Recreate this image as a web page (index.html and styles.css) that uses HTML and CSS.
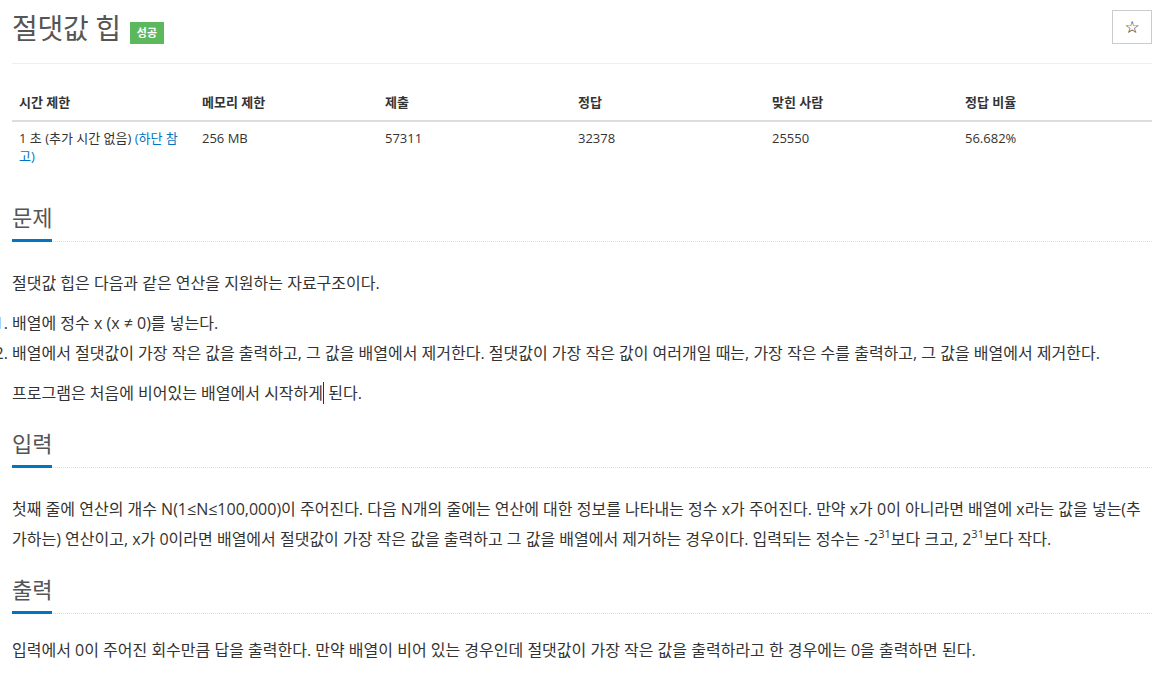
FILE: index.html
```html
<!DOCTYPE html>
<html lang="ko">
<head>
<meta charset="utf-8">
<title>절댓값 힙</title>
<link rel="stylesheet" href="styles.css">
</head>
<body>
<div class="container">
  <div class="page-header">
    <h1 class="title">절댓값 힙 <span class="badge">성공</span></h1>
    <button class="star">☆</button>
  </div>

  <table class="info">
    <thead>
      <tr>
        <th class="c1">시간 제한</th>
        <th class="c2">메모리 제한</th>
        <th class="c3">제출</th>
        <th class="c4">정답</th>
        <th class="c5">맞힌 사람</th>
        <th>정답 비율</th>
      </tr>
    </thead>
    <tbody>
      <tr>
        <td>1 초 (추가 시간 없음) <a href="#">(하단 참고)</a></td>
        <td>256 MB</td>
        <td>57311</td>
        <td>32378</td>
        <td>25550</td>
        <td>56.682%</td>
      </tr>
    </tbody>
  </table>

  <section class="section first">
    <div class="headline"><h2>문제</h2></div>
    <div class="text">
      <p>절댓값 힙은 다음과 같은 연산을 지원하는 자료구조이다.</p>
      <ol>
        <li>배열에 정수 x (x ≠ 0)를 넣는다.</li>
        <li>배열에서 절댓값이 가장 작은 값을 출력하고, 그 값을 배열에서 제거한다. 절댓값이 가장 작은 값이 여러개일 때는, 가장 작은 수를 출력하고, 그 값을 배열에서 제거한다.</li>
      </ol>
      <p>프로그램은 처음에 비어있는 배열에서 시작하게<span class="caret"></span> 된다.</p>
    </div>
  </section>

  <section class="section">
    <div class="headline"><h2>입력</h2></div>
    <div class="text">
      <p>첫째 줄에 연산의 개수 N(1≤N≤100,000)이 주어진다. 다음 N개의 줄에는 연산에 대한 정보를 나타내는 정수 x가 주어진다. 만약 x가 0이 아니라면 배열에 x라는 값을 넣는(추가하는) 연산이고, x가 0이라면 배열에서 절댓값이 가장 작은 값을 출력하고 그 값을 배열에서 제거하는 경우이다. 입력되는 정수는 -2<sup>31</sup>보다 크고, 2<sup>31</sup>보다 작다.</p>
    </div>
  </section>

  <section class="section last">
    <div class="headline"><h2>출력</h2></div>
    <div class="text">
      <p>입력에서 0이 주어진 회수만큼 답을 출력한다. 만약 배열이 비어 있는 경우인데 절댓값이 가장 작은 값을 출력하라고 한 경우에는 0을 출력하면 된다.</p>
    </div>
  </section>
</div>
</body>
</html>
```

FILE: styles.css
```css
html, body {
  margin: 0;
  padding: 0;
  background: #fff;
}
body {
  font-family: "Open Sans", "Noto Sans CJK KR", sans-serif;
  color: #333;
  font-size: 13px;
}
.container {
  width: 1140px;
  padding: 0 12px;
}
.page-header {
  display: flex;
  justify-content: space-between;
  align-items: flex-start;
  padding-top: 10px;
  height: 53px;
  border-bottom: 1px solid #eee;
}
.title {
  margin: 0;
  font-size: 28px;
  font-weight: 400;
  color: #555;
  line-height: 36px;
  display: flex;
  align-items: center;
  gap: 9px;
  letter-spacing: -0.3px;
}
.badge {
  display: inline-block;
  background: #5cb85c;
  color: #fff;
  font-size: 11px;
  font-weight: 700;
  padding: 0 7px;
  height: 22px;
  line-height: 22px;
  margin-top: 10px;
  letter-spacing: 0;
}
.star {
  width: 40px;
  height: 34px;
  background: #fff;
  border: 1px solid #ccc;
  font-size: 17px;
  color: #222;
  padding: 0;
  font-family: "DejaVu Sans", sans-serif;
}
.info {
  width: 1140px;
  border-collapse: collapse;
  margin-top: 20px;
  word-break: break-all;
}
.info th {
  text-align: left;
  font-weight: 700;
  padding: 8px 7px;
  line-height: 20px;
  border-bottom: 2px solid #ddd;
  font-size: 13px;
}
.info td {
  padding: 7px 7px;
  line-height: 18px;
  vertical-align: top;
  font-size: 13px;
}
.info .c1 { width: 169px; }
.info .c2 { width: 169px; }
.info .c3 { width: 179px; }
.info .c4 { width: 180px; }
.info .c5 { width: 179px; }
.info a {
  color: #0076c0;
  text-decoration: none;
}
.section.first {
  margin-top: 20px;
}
.section.last {
  margin-top: 1px;
}
.headline {
  border-bottom: 1px dotted #ddd;
  height: 49px;
  display: flex;
  align-items: flex-end;
}
.headline h2 {
  margin: 0 0 -1px 0;
  font-size: 22px;
  font-weight: 400;
  color: #555;
  line-height: 32px;
  padding-bottom: 6px;
  border-bottom: 3px solid #0076c0;
}
.text {
  font-size: 16px;
  line-height: 30px;
  color: #333;
  padding-top: 26px;
  word-break: break-all;
}
.section.last .text {
  padding-top: 21px;
}
.text p {
  margin: 0 0 10px 0;
}
.text ol {
  margin: 0 0 10px 0;
  padding-left: 0;
}
.text sup {
  font-size: 11px;
  line-height: 1;
  vertical-align: 7px;
}
.caret {
  display: inline-block;
  width: 0;
  height: 22px;
  border-left: 1px solid #333;
  vertical-align: -5px;
}
```
